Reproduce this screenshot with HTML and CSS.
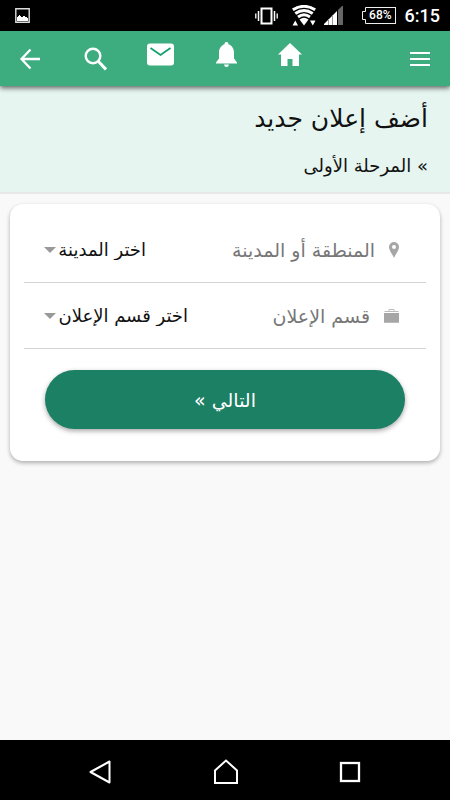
FILE: index.html
```html
<!DOCTYPE html>
<html lang="ar" dir="rtl">
<head>
<meta charset="utf-8">
<meta name="viewport" content="width=device-width, initial-scale=1">
<title>أضف إعلان جديد</title>
<link rel="stylesheet" href="styles.css">
</head>
<body>
<div class="status" dir="ltr">
  <svg class="status-picture" width="15" height="15" viewBox="0 0 15 15"><path d="M.8.8h13.4v13.4H.8z" fill="none" stroke="#ddd" stroke-width="1.4"/><path d="M2 13V9h1V8h1V7h1v1h1v1h2V8h2v1h2v1h1v3z" fill="#fff"/></svg>
  <div class="status-icons">
    <svg width="23" height="18" viewBox="0 0 23 18" fill="none" stroke="#fff"><path d="M6.5 1.5h10v15h-10z" stroke-width="2"/><path d="M3.5 4v10M19.500 4v10" stroke-width="1.500"/><path d="M.8 6.500v5M22.200 6.500v5" stroke-width="1.300"/></svg>
    <svg class="wifi" width="24" height="21" viewBox="0 0 24 21"><g fill="none" stroke="#fff" stroke-width="2.900"><path d="M.8 4.800q11.200-7 22.400 0"/><path d="M3.300 8.500q8.700-6 17.400 0"/><path d="M6 12q6-4.500 12 0"/></g><path d="M7.500 14.500q4.500-3.500 9 0L12 20.500z" fill="#fff"/><path d="M.5 20.500 3.300 15.500 6 20.500zM18 15.500h5.500L20.800 20.500z" fill="#fff"/></svg>
    <svg class="signal" width="19" height="19" viewBox="0 0 19 19"><path d="M0 19v-1l4-4v5zM5 19v-6l3-3v9zM9 19V9l4-4v14z" fill="#fff"/><path d="M14 19V4l4-4h1v19z" fill="#666"/><path d="M4.500 13v6M8.500 9v10" stroke="#999"/></svg>
    <span class="battery"><svg width="4" height="17" viewBox="0 0 4 17"><path d="M4 .5H3.500V4.500H.5v8h3v4H4" fill="none" stroke="#eee"/></svg><span class="battery-level">68%</span></span>
    <span class="clock">6:15</span>
  </div>
</div>
<header class="appbar" dir="ltr">
  <nav class="actions">
    <button type="button" class="icon-btn" aria-label="رجوع"><svg width="24" height="24" viewBox="0 0 24 24" fill="none" stroke="#fff" stroke-width="2.300"><path d="M21 12H3M11.500 2.500 2.500 12l9 9.500"/></svg></button>
    <button type="button" class="icon-btn" aria-label="بحث"><svg width="24" height="24" viewBox="0 0 24 24" fill="none" stroke="#fff"><circle cx="10" cy="9" r="7.300" stroke-width="2.400"/><path d="m15.500 14.500 7.500 8" stroke-width="3"/></svg></button>
    <button type="button" class="icon-btn raised" aria-label="الرسائل"><svg width="27" height="26" viewBox="0 0 27 26"><rect y="1.500" width="27" height="22" rx="3" fill="#fff"/><path d="m3.500 6 10 7 10-7" fill="none" stroke="#12a06c" stroke-width="1.800"/></svg></button>
    <button type="button" class="icon-btn raised" aria-label="التنبيهات"><svg width="24" height="26" viewBox="0 0 24 26" fill="#fff"><path d="M12.500 0q2 0 2 2.300C18 3.500 20 7 20 10.500v6l3 4v1H2v-1l3-4v-6C5 7 7 3.500 10.500 2.300c0-2.300 2-2.300 2-2.300zM10 22.500h5q-.5 2.500-2.500 2.500T10 22.500z"/></svg></button>
    <button type="button" class="icon-btn raised" aria-label="الرئيسية"><svg width="24" height="26" viewBox="0 0 24 26" fill="#fff"><path d="M12 1 24 12.500h-3V24h-6.500v-7h-5v7H3V12.500H0z"/></svg></button>
  </nav>
  <button type="button" class="icon-btn" aria-label="القائمة"><svg width="20" height="16" viewBox="0 0 20 16"><path d="M0 2h20M0 8h20M0 14h20" stroke="#fff" stroke-width="2"/></svg></button>
</header>
<main>
  <section class="heading">
    <h1>أضف إعلان جديد</h1>
    <p>» المرحلة الأولى</p>
  </section>
  <form class="card">
    <div class="field">
      <label for="city"><svg width="10" height="16" viewBox="0 0 10 16"><path fill="#a6a6a6" fill-rule="evenodd" d="M5 0a5 5 0 0 1 5 5c0 3.500-3.500 7-5 11C3.500 12 0 8.500 0 5a5 5 0 0 1 5-5zm0 3a2 2 0 1 0 0 4 2 2 0 0 0 0-4z"/></svg>المنطقة أو المدينة</label>
      <div class="choice"><select id="city"><option>اختر المدينة</option></select><svg width="12" height="6" viewBox="0 0 12 6"><path d="M0 0h12L6 6z" fill="#999"/></svg></div>
    </div>
    <div class="field">
      <label for="section"><svg width="15" height="14" viewBox="0 0 15 14"><path d="M0 4h15v9H0z" fill="#a6a6a6"/><path d="M.5 2.500h14M5 2.500V.5h5v2M0 13.500h15" fill="none" stroke="#bbb"/></svg>قسم الإعلان</label>
      <div class="choice"><select id="section"><option>اختر قسم الإعلان</option></select><svg width="12" height="6" viewBox="0 0 12 6"><path d="M0 0h12L6 6z" fill="#999"/></svg></div>
    </div>
    <button type="submit" class="next">التالي »</button>
  </form>
</main>
<footer class="system-nav" dir="ltr">
  <button type="button" class="icon-btn" aria-label="السابق"><svg width="24" height="26" viewBox="0 0 24 26"><path d="M21.500 2.500v21L2.500 13z" fill="none" stroke="#fff" stroke-width="2" stroke-linejoin="round"/></svg></button>
  <button type="button" class="icon-btn" aria-label="الشاشة الرئيسية"><svg width="26" height="26" viewBox="0 0 26 26"><path d="M2 11.500 13 1.500l11 10v12.500H2z" fill="none" stroke="#fff" stroke-width="2"/></svg></button>
  <button type="button" class="icon-btn" aria-label="التطبيقات الأخيرة"><svg width="22" height="22" viewBox="0 0 22 22"><rect x="2" y="2" width="18" height="18" fill="none" stroke="#fff" stroke-width="2.300"/></svg></button>
</footer>
</body>
</html>
```
FILE: styles.css
```css
* {
  box-sizing: border-box;
}

body {
  margin: 0;
  min-height: 100vh;
  display: flex;
  flex-direction: column;
  background: #f9f9f9;
  color: #111;
  font-family: "DejaVu Sans", sans-serif;
}

svg {
  display: block;
  flex: none;
}

button {
  font: inherit;
  cursor: pointer;
}

.status {
  display: flex;
  align-items: center;
  justify-content: space-between;
  height: 31px;
  padding: 0 10px 0 15px;
  background: #000;
  color: #fff;
  font-family: Roboto, sans-serif;
}

.status-icons {
  display: flex;
  align-items: center;
}

.wifi {
  margin-left: 14px;
}

.signal {
  margin-left: 8px;
}

.battery {
  display: flex;
  margin-left: 19px;
}

.battery-level {
  height: 17px;
  padding: 0 3px;
  border: 1px solid #eee;
  border-left: 0;
  font-size: 12px;
  font-weight: 500;
  line-height: 15px;
}

.clock {
  margin-left: 9px;
  font-size: 18px;
  font-weight: 500;
}

.appbar {
  position: relative;
  display: flex;
  align-items: center;
  justify-content: space-between;
  height: 55px;
  padding: 0 20px 0 19px;
  background: #3dad80;
  box-shadow: 0 2px 5px rgba(0, 0, 0, 0.6);
}

.actions {
  display: flex;
  align-items: center;
  gap: 40px;
}

.icon-btn {
  padding: 0;
  border: 0;
  background: none;
}

.raised {
  padding-bottom: 8px;
}

main {
  flex: 1;
}

.heading {
  padding: 10px 22px 8px;
  background: #e6f5f0;
  border-bottom: 2px solid #e8e8e8;
}

h1 {
  margin: 0;
  font-size: 25px;
  font-weight: 400;
  line-height: 46px;
}

.heading p {
  margin: 0;
  padding-top: 6px;
  font-size: 18px;
  line-height: 36px;
}

.card {
  margin: 10px;
  padding: 13px 14px 32px;
  border-radius: 13px;
  background: #fff;
  box-shadow: 0 2px 4px rgba(0, 0, 0, 0.3);
}

.field {
  display: flex;
  align-items: center;
  justify-content: space-between;
  height: 66px;
  padding: 0 27px 0 20px;
  border-bottom: 1px solid #d4d4d4;
  font-size: 18px;
}

.field label {
  display: flex;
  align-items: center;
  gap: 14px;
  color: #777;
  font-size: 19px;
}

.choice {
  display: flex;
  align-items: center;
  gap: 2px;
}

select {
  appearance: none;
  padding: 0;
  border: 0;
  background: none;
  color: #111;
  font: inherit;
}

.next {
  display: block;
  width: calc(100% - 42px);
  height: 59px;
  margin: 21px auto 0;
  border: 0;
  border-radius: 30px;
  background: #1c8065;
  box-shadow: 0 2px 5px rgba(0, 0, 0, 0.35);
  color: #fff;
  font-size: 19px;
}

.system-nav {
  display: flex;
  align-items: center;
  justify-content: space-between;
  height: 60px;
  padding: 4px 89px 0 88px;
  background: #000;
}
```
